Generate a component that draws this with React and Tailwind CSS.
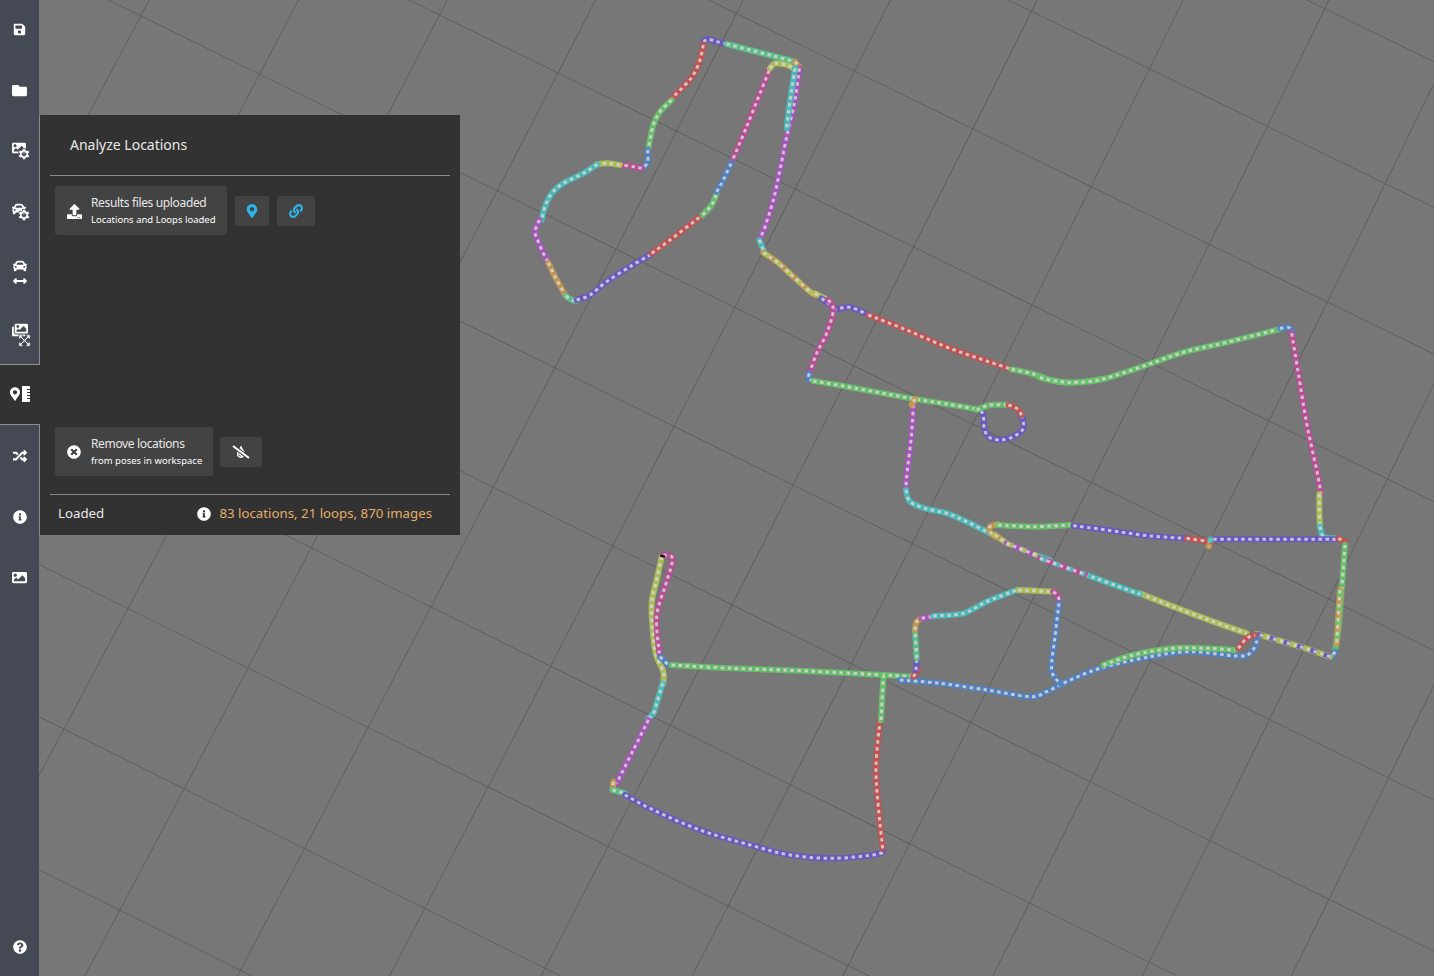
import React from "react";
import {
  FaSave,
  FaFolder,
  FaImage,
  FaImages,
  FaCog,
  FaCar,
  FaArrowsAltH,
  FaExpandArrowsAlt,
  FaMapMarkerAlt,
  FaRulerVertical,
  FaRandom,
  FaInfoCircle,
  FaQuestionCircle,
  FaUpload,
  FaLink,
  FaTimesCircle,
  FaTint,
} from "react-icons/fa";

const C = {
  violet: "#6a56c4",
  red: "#c4504f",
  green: "#66c268",
  mint: "#58c48a",
  blue: "#4f82c6",
  pink: "#bd4a98",
  lime: "#afc256",
  teal: "#48bdbc",
  orchid: "#a952c0",
  orange: "#c4984e",
};

// points are read off 3x crops of the map, so each run carries its crop origin
const crop = (ox, oy, runs) =>
  runs.map(([color, pts, over]) => ({
    color,
    over,
    pts: pts
      .trim()
      .split(/\s+/)
      .map((p) => {
        const [x, y] = p.split(",").map(Number);
        return [ox + x / 3, oy + y / 3];
      }),
  }));

const RUNS = [
  ...crop(520, 30, [
    [C.violet, "620,42 590,35 565,28 550,35"],
    [C.red, "550,45 540,90 520,135 495,165 455,205"],
    [C.green, "455,210 420,245 400,285 385,355"],
    [C.blue, "383,360 383,395 370,415"],
    [C.pink, "365,415 340,410 305,405"],
    [C.lime, "300,405 260,400 232,403"],
    [C.teal, "232,403 190,430 130,460 95,490 75,530 65,570"],
    [C.orchid, "58,570 45,605 55,635 70,670 85,698"],
    [C.orange, "85,698 105,740 130,785 138,798"],
    [C.mint, "138,798 155,810 170,812"],
    [C.violet, "170,810 210,795 260,755 330,710 395,672"],
    [C.red, "395,670 450,630 545,557"],
    [C.green, "548,555 575,525 590,490"],
    [C.blue, "590,485 610,450 640,385"],
    [C.pink, "640,385 680,290 720,190 750,115"],
    [C.mint, "620,42 690,60 760,78 825,95"],
    [C.orange, "825,95 838,110"],
    [C.orchid, "838,115 825,210 800,320 780,420 760,510 735,590 718,630"],
    [C.lime, "750,115 765,100 800,105 825,118"],
    [C.teal, "825,115 815,180 805,250 800,295"],
    [C.teal, "718,630 730,660"],
    [C.orange, "730,668 770,695 820,740 870,785 885,795", C.lime],
    [C.lime, "885,790 915,805"],
    [C.violet, "905,805 930,825"],
  ]),
  ...crop(800, 300, [
    [C.violet, "100,30 150,22 205,45"],
    [C.red, "205,45 320,90 450,145 635,208"],
    [C.green, "635,208 700,222 760,243 820,248 900,238"],
    [C.pink, "85,0 100,30 80,100 50,160 28,220"],
    [C.blue, "28,220 25,235 40,243"],
    [C.green, "40,243 130,258 250,280 345,297 440,312 545,330"],
    [C.orchid, "340,315 335,400 320,530 318,570"],
    [C.orange, "345,297 335,315"],
    [C.teal, "318,570 330,605 375,625 440,640 500,665 570,700"],
    [C.violet, "665,345 670,385 640,410 600,420 565,410 552,380 550,345 540,330"],
    [C.green, "530,330 570,315 625,315"],
    [C.red, "625,315 650,325 665,345"],
    [C.orange, "595,672 570,680 570,695 585,710"],
    [C.green, "595,675 700,680 810,675"],
    [C.lime, "585,705 620,730", C.orange],
    [C.orchid, "620,730 720,770", C.lime],
    [C.teal, "720,770 750,780"],
  ]),
  ...crop(1040, 310, [
    [C.green, "0,203 60,215 115,217 190,207 320,165 430,127 560,97 720,57"],
    [C.blue, "720,55 745,52 758,65"],
    [C.pink, "755,70 775,190 800,340 830,480 843,550"],
    [C.lime, "838,552 838,600 840,650"],
    [C.teal, "840,650 850,680 885,685"],
    [C.violet, "100,647 200,660 330,678 440,685"],
    [C.red, "440,685 515,695"],
    [C.violet, "520,688 690,688 890,688"],
    [C.red, "895,685 915,695"],
    [C.orange, "505,708 507,709"],
    [C.teal, "512,688 513,690"],
    [C.green, "915,705 908,800 895,960 885,1020"],
    [C.orange, "900,840 890,1000", C.green],
    [C.blue, "885,1025 875,1042"],
    [C.lime, "870,1040 780,1010 650,972", C.violet],
    [C.lime, "300,850 400,890 520,935 620,970"],
    [C.teal, "135,793 270,842 300,852"],
    [C.pink, "0,745 135,793", C.teal],
  ]),
  ...crop(600, 540, [
    [C.lime, "185,50 170,120 155,190 160,290 170,350 190,395 190,430"],
    [C.pink, "190,45 215,50 215,75 195,140 170,230 178,340"],
    [C.blue, "180,350 205,375"],
    [C.green, "215,375 400,385 600,392 850,405 940,410"],
    [C.teal, "188,430 170,490 160,520 145,535"],
    [C.orchid, "145,540 100,630 50,730"],
    [C.orange, "40,725 38,750"],
    [C.mint, "38,750 75,760"],
    [C.violet, "75,765 160,810 300,870 450,915 570,945 700,955 830,943 850,930"],
    [C.red, "848,925 835,800 828,680 840,540"],
    [C.green, "843,540 850,420 855,405"],
  ]),
  ...crop(900, 570, [
    [C.blue, "0,330 120,340 260,360 390,380 440,365 500,335 600,295 750,260 870,245 1010,258 1050,250 1070,215 1065,195"],
    [C.red, "40,320 55,300"],
    [C.violet, "48,300 50,265"],
    [C.mint, "50,265 45,180"],
    [C.orange, "45,180 50,155 65,145"],
    [C.orchid, "65,145 95,140"],
    [C.teal, "100,138 190,130 260,95 350,60"],
    [C.lime, "355,60 460,65"],
    [C.pink, "460,65 475,80 477,100"],
    [C.blue, "477,100 465,200 455,300 480,340"],
    [C.green, "610,285 700,255 820,235 920,235 1005,240"],
    [C.red, "1015,235 1040,205 1065,195"],
  ]),
];

// catmull-rom through the crop points so the track has no hard corners
const smoothPath = (pts) => {
  let d = `M${pts[0][0]} ${pts[0][1]}`;
  for (let i = 0; i < pts.length - 1; i++) {
    const p0 = pts[i - 1] || pts[i];
    const p1 = pts[i];
    const p2 = pts[i + 1];
    const p3 = pts[i + 2] || p2;
    const c1x = p1[0] + (p2[0] - p0[0]) / 6;
    const c1y = p1[1] + (p2[1] - p0[1]) / 6;
    const c2x = p2[0] - (p3[0] - p1[0]) / 6;
    const c2y = p2[1] - (p3[1] - p1[1]) / 6;
    d += ` C${c1x} ${c1y} ${c2x} ${c2y} ${p2[0]} ${p2[1]}`;
  }
  return d;
};

// floor grid in perspective, fitted to the crossings in the picture
const gridPoint = (a, b) => [
  558 + a * 118.5 - b * 60.5 - 0.3 * b * b + 0.3 * a * b,
  73 + a * 58 + b * 117.5 + 0.3 * b * b + 0.3 * a * b,
];

const gridLine = (fn) => {
  const pts = [];
  for (let t = -14; t <= 16; t += 1) pts.push(fn(t).join(","));
  return pts.join(" ");
};

const GRID = [];
for (let i = -10; i <= 14; i++) {
  GRID.push(gridLine((t) => gridPoint(t, i)));
  GRID.push(gridLine((t) => gridPoint(i, t)));
}

const MapCanvas = () => (
  <svg className="absolute inset-0" width="1434" height="976" viewBox="0 0 1434 976">
    {GRID.map((pts, i) => (
      <polyline key={i} points={pts} fill="none" stroke="#5c5c5c" strokeWidth="0.9" />
    ))}
    {RUNS.map((run, i) => {
      const d = smoothPath(run.pts);
      return (
        <g key={i} fill="none" strokeLinejoin="round">
          <path d={d} stroke={run.color} strokeWidth="6" strokeLinecap="round" opacity="0.92" />
          {run.over && <path d={d} stroke={run.over} strokeWidth="5" strokeDasharray="7 7" opacity="0.92" />}
          <path d={d} stroke="#d6d6d6" strokeWidth="3" strokeDasharray="3.5 3.5" opacity="0.85" />
        </g>
      );
    })}
    <line x1="660" y1="555.5" x2="665" y2="556.5" stroke="#111111" strokeWidth="2" />
  </svg>
);

const NavIcon = ({ children, active }) => (
  <div
    className={`flex items-center justify-center text-white ${
      active
        ? "relative z-10 w-10 h-[60.8px] -mt-[0.8px] mb-[0.8px] bg-[#323232] border-y border-[#8c8c8c]"
        : "w-[39px] h-[60.8px]"
    }`}
  >
    {children}
  </div>
);

const WithCog = ({ children }) => (
  <div className="relative w-[18px] h-[19px] ml-[3px] -mt-[3px]">
    {children}
    <FaCog className="absolute right-0 bottom-0 text-[12px] stroke-[#454954] stroke-[40]" />
  </div>
);

const Sidebar = () => (
  <aside className="absolute left-0 top-0 h-full w-[39px] bg-[#454954] flex flex-col z-10">
    <NavIcon>
      <FaSave className="text-[13px] -mt-[1px]" />
    </NavIcon>
    <NavIcon>
      <FaFolder className="text-[15px] -mt-[2px]" />
    </NavIcon>
    <NavIcon>
      <WithCog>
        <FaImage className="absolute left-0 top-0 text-[14px]" />
      </WithCog>
    </NavIcon>
    <NavIcon>
      <WithCog>
        <FaCar className="absolute left-0 top-0 text-[14px]" />
      </WithCog>
    </NavIcon>
    <NavIcon>
      <div className="flex flex-col items-center">
        <FaCar className="text-[14px]" />
        <FaArrowsAltH className="text-[14px] mt-[1px]" />
      </div>
    </NavIcon>
    <NavIcon>
      <div className="relative w-[20px] h-[25px]">
        <FaImages className="absolute left-[2px] top-0 text-[16px]" />
        <FaExpandArrowsAlt className="absolute right-[-1px] bottom-0 text-[13px] stroke-[#454954] stroke-[30]" />
      </div>
    </NavIcon>
    <NavIcon active>
      <div className="flex items-center gap-[2px]">
        <FaMapMarkerAlt className="w-[10px] h-[14px]" />
        <FaRulerVertical className="w-[8px] h-[16px]" />
      </div>
    </NavIcon>
    <NavIcon>
      <FaRandom className="text-[14px]" />
    </NavIcon>
    <NavIcon>
      <FaInfoCircle className="text-[14px]" />
    </NavIcon>
    <NavIcon>
      <FaImage className="text-[15px]" />
    </NavIcon>
    <div className="mt-auto h-[58px] flex items-center justify-center text-white">
      <FaQuestionCircle className="text-[14px]" />
    </div>
  </aside>
);

const TwoLineButton = ({ icon, title, sub }) => (
  <button className="h-[49px] pl-[11px] pr-[11px] pt-[1px] flex items-center gap-[9px] rounded-[3px] bg-[#434343] text-left text-[#e8e8e8]">
    <span className="w-[16px] flex justify-center text-white">{icon}</span>
    <span className="flex flex-col">
      <span className="text-[12px] leading-[16px] tracking-[-0.35px]">{title}</span>
      <span className="text-[9.5px] leading-[16px] mt-[1px] text-white">{sub}</span>
    </span>
  </button>
);

const IconButton = ({ children, className }) => (
  <button className={`h-[30px] flex items-center justify-center rounded-[3px] bg-[#434343] ${className}`}>
    {children}
  </button>
);

const Panel = () => (
  <section className="absolute left-[39px] top-[115px] w-[421px] h-[420px] bg-[#323232] border-l border-[#8c8c8c] flex flex-col px-[10px] font-['Noto_Sans',sans-serif] text-[#e8e8e8] z-0">
    <header className="h-[61px] shrink-0 flex items-center pl-5 pb-[1px] border-b border-[#8a8a8a] text-[14px]">
      Analyze Locations
    </header>
    <div className="flex-1 flex flex-col justify-between px-[5px] pt-[10px] pb-[18px]">
      <div className="flex items-center gap-2">
        <TwoLineButton
          icon={<FaUpload className="text-[15px]" />}
          title="Results files uploaded"
          sub="Locations and Loops loaded"
        />
        <IconButton className="w-[34px] text-[#2fb4e8]">
          <FaMapMarkerAlt className="text-[14px]" />
        </IconButton>
        <IconButton className="w-[38px] text-[#2fb4e8]">
          <FaLink className="text-[14px]" />
        </IconButton>
      </div>
      <div className="flex items-center gap-[7px]">
        <TwoLineButton
          icon={<FaTimesCircle className="text-[14px]" />}
          title="Remove locations"
          sub="from poses in workspace"
        />
        <IconButton className="w-[42px] text-white">
          <span className="relative flex">
            <FaTint className="text-[12px] mt-[1px]" />
            <span className="absolute left-[-4px] top-[6px] w-[20px] h-[2px] bg-white rotate-[37deg] shadow-[0_0_0_1px_#434343]" />
          </span>
        </IconButton>
      </div>
    </div>
    <footer className="h-[41px] shrink-0 flex items-center justify-between pl-2 pr-[18px] pb-[2px] border-t border-[#8a8a8a] text-[13.25px]">
      <span>Loaded</span>
      <span className="flex items-center gap-2">
        <FaInfoCircle className="text-[14px] text-white" />
        <span className="text-[#e3ae68]">83 locations, 21 loops, 870 images</span>
      </span>
    </footer>
  </section>
);

export default function App() {
  return (
    <div className="relative w-[1434px] h-[976px] overflow-hidden bg-[#777777]">
      <MapCanvas />
      <Panel />
      <Sidebar />
    </div>
  );
}
